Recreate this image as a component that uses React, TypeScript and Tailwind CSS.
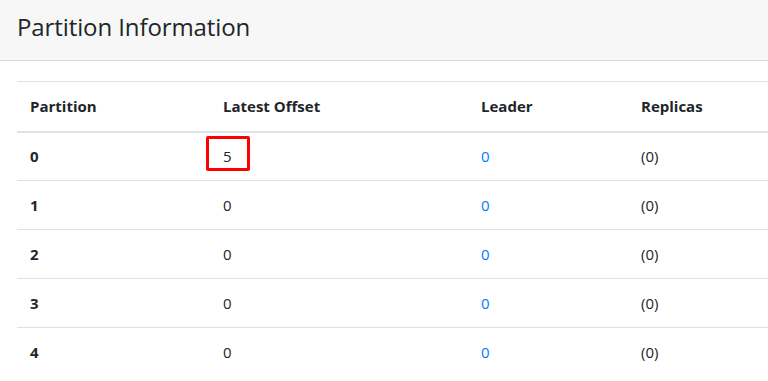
const rows = [
  { partition: 0, offset: 5, leader: 0, replicas: '(0)' },
  { partition: 1, offset: 0, leader: 0, replicas: '(0)' },
  { partition: 2, offset: 0, leader: 0, replicas: '(0)' },
  { partition: 3, offset: 0, leader: 0, replicas: '(0)' },
  { partition: 4, offset: 0, leader: 0, replicas: '(0)' },
];

export default function App() {
  return (
    <div
      className="w-[768px] h-[381px] overflow-hidden bg-white text-[#212529]"
      style={{ fontFamily: '"Open Sans", "Noto Sans", sans-serif' }}
    >
      {/* Card header */}
      <div className="h-[61px] bg-[#f7f7f7] border-b border-[#dcdcdc] pl-[17px] flex items-center">
        <h4 className="text-[24px] font-medium leading-none tracking-[-0.1px] pb-[6px]">Partition Information</h4>
      </div>

      {/* Card body */}
      <div className="pt-[20px] pl-[17px]">
        <table className="w-[800px] border-collapse text-[15px] table-fixed">
          <thead>
            <tr className="border-t border-[#dee2e6] border-b-2 h-[50px]">
              <th className="w-[194px] text-left font-bold px-3 pl-[13px]">Partition</th>
              <th className="w-[258px] text-left font-bold px-3">Latest Offset</th>
              <th className="w-[160px] text-left font-bold px-3">Leader</th>
              <th className="text-left font-bold px-3">Replicas</th>
            </tr>
          </thead>
          <tbody>
            {rows.map((r, i) => (
              <tr key={r.partition} className={i === 0 ? 'h-[49px]' : 'border-t border-[#dee2e6] h-[49px]'}>
                <td className="px-3 pl-[13px] font-bold">{r.partition}</td>
                <td className="px-3">
                  <span className="relative">
                    {r.offset}
                    {r.partition === 0 && (
                      <span className="absolute left-[-17px] top-[-10px] w-[44px] h-[35px] border-[3px] border-[#ff0000] rounded-[2px]" />
                    )}
                  </span>
                </td>
                <td className="px-3 text-[#007bff]">{r.leader}</td>
                <td className="px-3">{r.replicas}</td>
              </tr>
            ))}
          </tbody>
        </table>
      </div>
    </div>
  );
}
